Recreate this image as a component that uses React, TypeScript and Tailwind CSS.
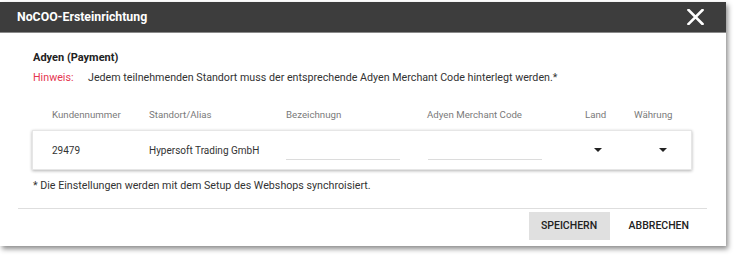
import React from "react";

const Caret = () => (
  <svg width="8" height="4" viewBox="0 0 8 4" className="block">
    <path d="M0 0 L8 0 L4 4 Z" fill="#222" />
  </svg>
);

export default function App() {
  return (
    <div
      className="w-[734px] h-[256px] bg-white overflow-hidden"
      style={{ fontFamily: "Roboto, 'Liberation Sans', sans-serif" }}
    >
      <div className="mt-[2px] w-[726px] bg-white shadow-[2px_3px_5px_rgba(0,0,0,0.45)] flex flex-col">
        {/* Header */}
        <div className="h-[31px] bg-[#3d3d3d] flex items-center justify-between pl-[17px] pr-[22px] border-b border-[#8a8a8a]">
          <span className="text-white font-bold text-[12.3px]">NoCOO-Ersteinrichtung</span>
          <svg width="17" height="16" viewBox="0 0 17 16" className="block">
            <path d="M1.5 1 L15.5 15 M15.5 1 L1.5 15" stroke="#fff" strokeWidth="2.6" strokeLinecap="square" />
          </svg>
        </div>

        {/* Body */}
        <div className="pl-[33px] pr-[34px]">
          <div className="mt-[17px] text-[11px] leading-[16px] font-bold text-[#222]">Adyen (Payment)</div>
          <div className="mt-[4px] flex text-[10.7px] leading-[16px] text-[#333]">
            <span className="w-[55px] text-[#e5364f]">Hinweis:</span>
            <span>Jedem teilnehmenden Standort muss der entsprechende Adyen Merchant Code hinterlegt werden.*</span>
          </div>

          {/* Table headers */}
          <div className="mt-[22px] ml-[-1px] flex text-[9.7px] leading-[14px] text-[#7a7a7a] pl-[20px]">
            <div className="w-[97px]">Kundennummer</div>
            <div className="w-[137px]">Standort/Alias</div>
            <div className="w-[141px]">Bezeichnugn</div>
            <div className="w-[158px]">Adyen Merchant Code</div>
            <div className="w-[49px]">Land</div>
            <div>Währung</div>
          </div>

          {/* Row card */}
          <div className="mt-[8px] ml-[-1px] w-[660px] h-[40px] border border-[#e6e6e6] shadow-[0_1px_3px_rgba(0,0,0,0.3)] flex items-center pl-[19px] text-[10px] text-[#333]">
            <div className="w-[97px]">29479</div>
            <div className="w-[137px]">Hypersoft Trading GmbH</div>
            <div className="w-[141px] self-end pb-[9px]">
              <div className="w-[114px] border-b border-[#dcdcdc]" />
            </div>
            <div className="w-[158px] self-end pb-[9px]">
              <div className="w-[114px] ml-[1px] border-b border-[#dcdcdc]" />
            </div>
            <div className="w-[49px] flex pl-[9px]">
              <Caret />
            </div>
            <div className="flex pl-[25px]">
              <Caret />
            </div>
          </div>

          <div className="mt-[8px] text-[10.7px] leading-[16px] text-[#333]">
            * Die Einstellungen werden mit dem Setup des Webshops synchroisiert.
          </div>
        </div>

        {/* Divider */}
        <div className="mt-[14px] ml-[18px] w-[689px] border-t border-[#dedede]" />

        {/* Footer */}
        <div className="mt-[3px] mb-[6px] flex justify-end pr-[37px] items-center gap-[19px]">
          <div className="h-[28px] w-[81px] bg-[#e0e0e0] flex items-center justify-center text-[10.5px] font-medium text-[#222]">
            SPEICHERN
          </div>
          <div className="h-[28px] flex items-center text-[10.5px] font-medium text-[#222]">ABBRECHEN</div>
        </div>
      </div>
    </div>
  );
}
